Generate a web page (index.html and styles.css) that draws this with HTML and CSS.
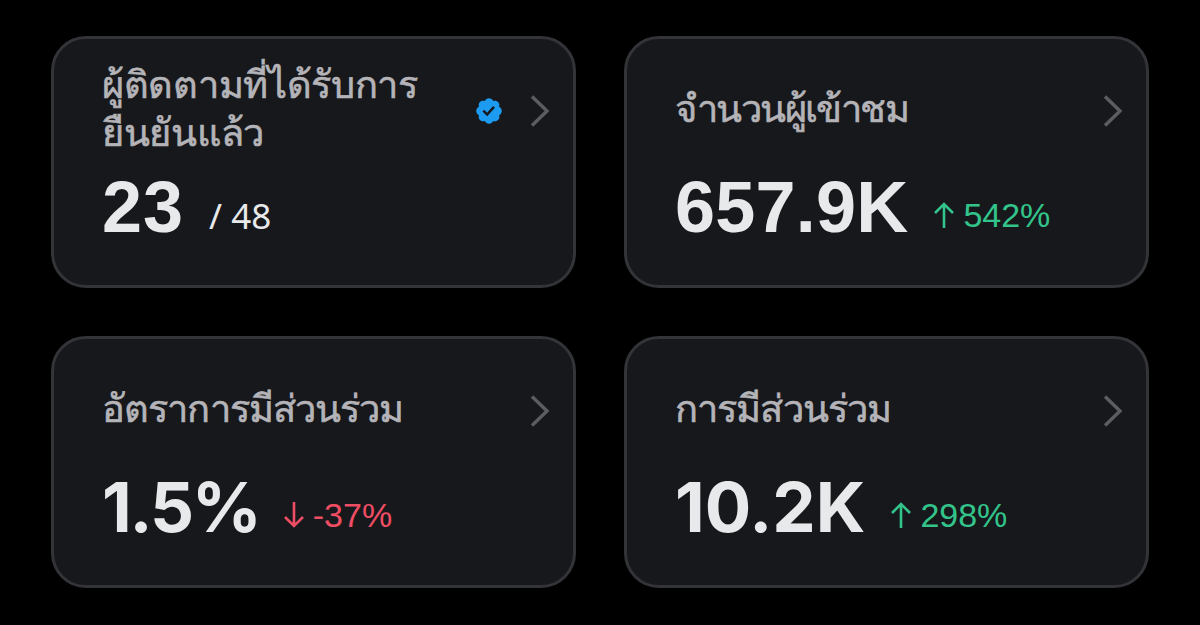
FILE: index.html
```
<!DOCTYPE html>
<html lang="th">
<head>
    <meta charset="UTF-8">
    <meta name="viewport" content="width=device-width, initial-scale=1.0">
    <title>Analytics</title>
    <link rel="stylesheet" href="styles.css">
</head>
<body>
    <div class="container">
        <div class="card">
            <div class="card-head">
                <h4 class="title followers-title">ผู้ติดตามที่ได้รับการ<br>ยืนยันแล้ว</h4>
                <svg class="badge" viewBox="0 0 22 22"><path fill="#1d9bf0" d="M20.396 11c-.018-.646-.215-1.275-.57-1.816-.354-.54-.852-.972-1.438-1.246.223-.607.27-1.264.14-1.897-.131-.634-.437-1.218-.882-1.687-.47-.445-1.053-.75-1.687-.882-.633-.13-1.29-.083-1.897.14-.273-.587-.704-1.086-1.245-1.44S11.647 1.62 11 1.604c-.646.017-1.273.213-1.813.568s-.969.854-1.24 1.44c-.608-.223-1.267-.272-1.902-.14-.635.13-1.22.436-1.69.882-.445.47-.749 1.055-.878 1.688-.13.633-.08 1.29.144 1.896-.587.274-1.087.705-1.443 1.245-.356.54-.555 1.17-.574 1.817.02.647.218 1.276.574 1.817.356.54.856.972 1.443 1.245-.224.606-.274 1.263-.144 1.896.13.634.433 1.218.877 1.688.47.443 1.054.747 1.687.878.633.132 1.29.084 1.897-.136.274.586.705 1.084 1.246 1.439.54.354 1.17.551 1.816.569.647-.016 1.276-.213 1.817-.567s.972-.854 1.245-1.44c.604.239 1.266.296 1.903.164.636-.132 1.22-.447 1.68-.907.46-.46.776-1.044.908-1.681s.075-1.299-.165-1.903c.586-.274 1.084-.705 1.439-1.246.354-.54.551-1.17.569-1.816z"/><path fill="#17181c" d="M9.662 14.85l-3.429-3.428 1.293-1.302 2.072 2.072 4.4-4.794 1.347 1.246z"/></svg>
                <svg class="arrow" viewBox="0 0 20 32"><path d="M2 1.5l15 14.5L2 30.5"/></svg>
            </div>
            <div class="card-body">
                <span class="value followers">23</span>
                <span class="total">/ 48</span>
            </div>
        </div>
        <div class="card">
            <div class="card-head">
                <h4 class="title views-title">จำนวนผู้เข้าชม</h4>
                <svg class="arrow" viewBox="0 0 20 32"><path d="M2 1.5l15 14.5L2 30.5"/></svg>
            </div>
            <div class="card-body">
                <span class="value views">657.9K</span>
                <span class="change up"><svg viewBox="0 0 20 26"><path d="M10 26V2M1 11l9-9 9 9"/></svg><span class="percent">542%</span></span>
            </div>
        </div>
        <div class="card">
            <div class="card-head">
                <h4 class="title rate-title">อัตราการมีส่วนร่วม</h4>
                <svg class="arrow" viewBox="0 0 20 32"><path d="M2 1.5l15 14.5L2 30.5"/></svg>
            </div>
            <div class="card-body">
                <span class="value rate">1.5%</span>
                <span class="change down"><svg viewBox="0 0 20 26"><path d="M10 0v24M1 15l9 9 9-9"/></svg><span class="percent">-37%</span></span>
            </div>
        </div>
        <div class="card">
            <div class="card-head">
                <h4 class="title engagement-title">การมีส่วนร่วม</h4>
                <svg class="arrow" viewBox="0 0 20 32"><path d="M2 1.5l15 14.5L2 30.5"/></svg>
            </div>
            <div class="card-body">
                <span class="value engagement">10.2K</span>
                <span class="change up"><svg viewBox="0 0 20 26"><path d="M10 26V2M1 11l9-9 9 9"/></svg><span class="percent">298%</span></span>
            </div>
        </div>
    </div>
</body>
</html>
```
FILE: styles.css
```
*{
    margin: 0;
    padding: 0;
    box-sizing: border-box;
}
body{
    background-color: #000;
    font-family: Inter, "Noto Sans", sans-serif;
}
.container{
    display: grid;
    grid-template-columns: 525px 525px;
    grid-template-rows: 252px 252px;
    gap: 48px;
    padding: 36px 51px;
}
.card{
    background-color: #17181c;
    border: 3px solid #333437;
    border-radius: 35px;
    padding: 0 23px 0 48px;
}
.card-head{
    display: flex;
    align-items: center;
    height: 144px;
}
.title{
    flex: 1;
    color: #b4b4b8;
    font-size: 38px;
    font-weight: normal;
    line-height: 48px;
    white-space: nowrap;
    padding-bottom: 6px;
    -webkit-text-stroke: 0.6px #b4b4b8;
}
.followers-title{
    letter-spacing: -0.3px;
}
.views-title{
    letter-spacing: -1.6px;
}
.rate-title{
    letter-spacing: -0.9px;
}
.engagement-title{
    letter-spacing: -0.9px;
}
.badge{
    width: 30px;
    height: 30px;
    margin-right: 26px;
}
.arrow{
    width: 20px;
    height: 32px;
    fill: none;
    stroke: #5c5d61;
    stroke-width: 3.4;
}
.card-body{
    display: flex;
    align-items: flex-start;
    height: 80px;
}
.value{
    color: #e7e9ea;
    font-size: 69px;
    font-weight: bold;
    line-height: 48px;
}
.followers, .views{
    font-family: "Liberation Sans", sans-serif;
    font-size: 72px;
}
.followers{
    letter-spacing: 1px;
}
.views{
    letter-spacing: 0.2px;
}
.rate{
    letter-spacing: -2.2px;
}
.total{
    color: #e7e9ea;
    font-family: "Noto Sans", sans-serif;
    font-size: 35px;
    line-height: 34px;
    padding-top: 16px;
    margin-left: 25px;
}
.change{
    display: flex;
    align-items: center;
    font-family: "Liberation Sans", sans-serif;
    font-size: 34px;
    line-height: 34px;
    padding-top: 15px;
    margin-left: 26px;
}
.rate + .change{
    margin-left: 24px;
}
.change svg{
    width: 20px;
    height: 26px;
    margin-right: 9px;
    fill: none;
    stroke: currentColor;
    stroke-width: 2.6;
}
.up{
    color: #32c48a;
}
.down{
    color: #ef4d63;
}
```
